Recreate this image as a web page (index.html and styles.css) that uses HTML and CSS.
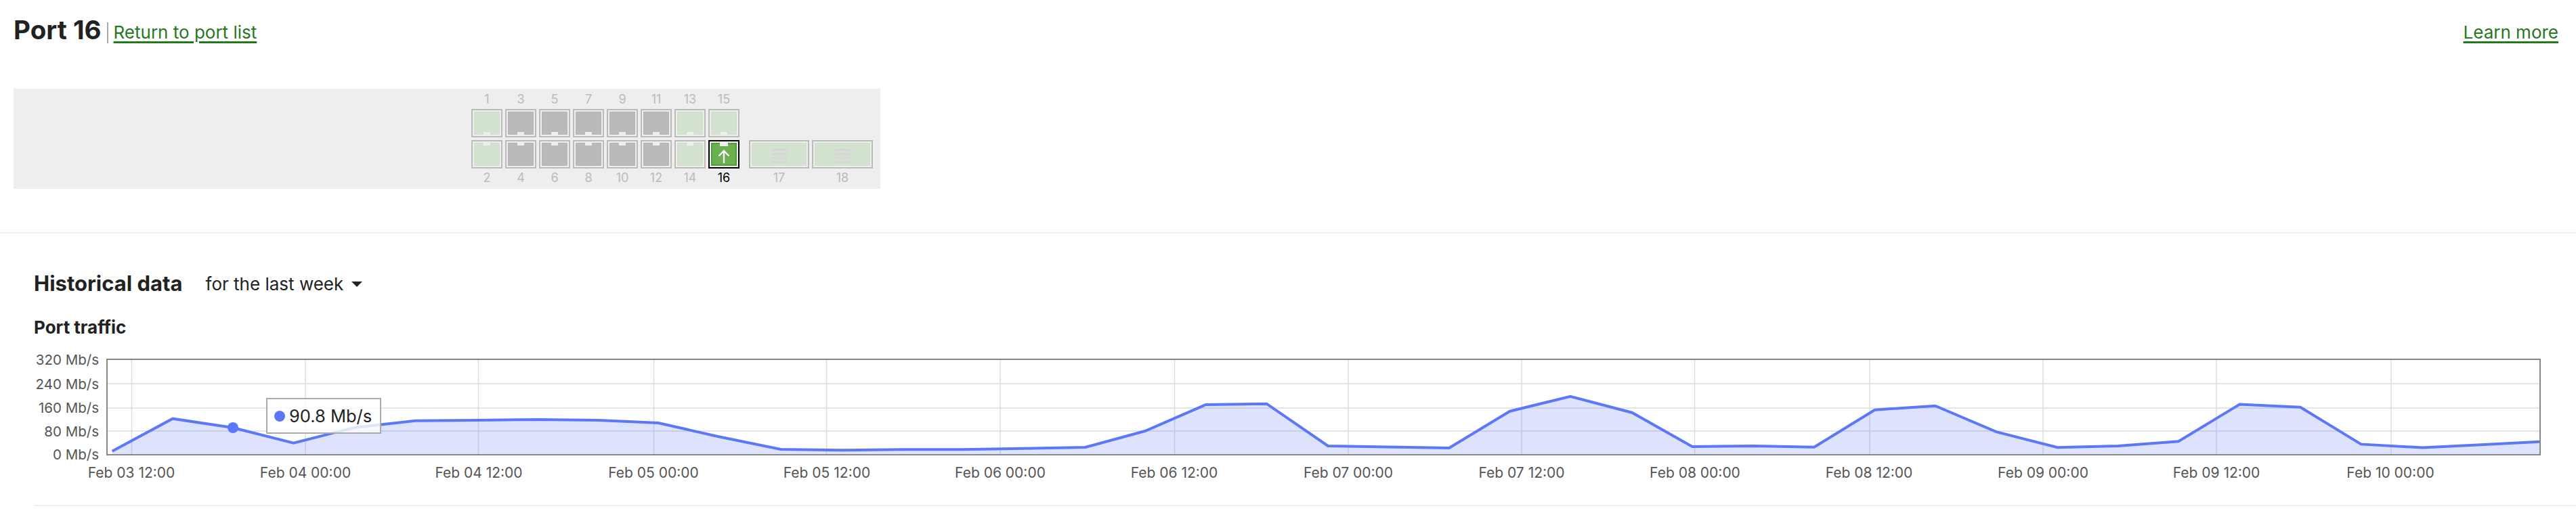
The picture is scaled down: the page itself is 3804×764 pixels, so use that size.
FILE: index.html
```html
<!DOCTYPE html>
<html lang="en">
<head>
<meta charset="utf-8">
<title>Port 16</title>
<link rel="stylesheet" href="styles.css">
</head>
<body>
<header class="head">
  <div class="head-left">
    <h1 class="title">Port 16</h1>
    <span class="sep"></span>
    <a class="link" href="#">Return to port list</a>
  </div>
  <a class="link" href="#">Learn more</a>
</header>

<section class="panel">
  <div class="switch">
    <div class="col"><span class="num">1</span><div class="port off"><div class="fill"></div></div><div class="port off down"><div class="fill"></div></div><span class="num">2</span></div>
    <div class="col"><span class="num">3</span><div class="port dis"><div class="fill"></div></div><div class="port dis down"><div class="fill"></div></div><span class="num">4</span></div>
    <div class="col"><span class="num">5</span><div class="port dis"><div class="fill"></div></div><div class="port dis down"><div class="fill"></div></div><span class="num">6</span></div>
    <div class="col"><span class="num">7</span><div class="port dis"><div class="fill"></div></div><div class="port dis down"><div class="fill"></div></div><span class="num">8</span></div>
    <div class="col"><span class="num">9</span><div class="port dis"><div class="fill"></div></div><div class="port dis down"><div class="fill"></div></div><span class="num">10</span></div>
    <div class="col"><span class="num">11</span><div class="port dis"><div class="fill"></div></div><div class="port dis down"><div class="fill"></div></div><span class="num">12</span></div>
    <div class="col"><span class="num">13</span><div class="port off"><div class="fill"></div></div><div class="port off down"><div class="fill"></div></div><span class="num">14</span></div>
    <div class="col"><span class="num">15</span><div class="port off"><div class="fill"></div></div>
      <div class="port active down"><div class="fill">
        <svg class="arrow" viewBox="0 0 18 20" aria-hidden="true"><path d="M9 20V2M1.5 9.5 9 2l7.5 7.5" fill="none" stroke="#fff" stroke-width="2.4"/></svg>
      </div></div>
      <span class="num cur">16</span>
    </div>
    <div class="sfps">
      <div class="col sfp-col sfp-a"><div class="port sfp off"><div class="fill"><div class="bars"><i></i><i></i><i></i><i></i></div></div></div><span class="num">17</span></div>
      <div class="col sfp-col sfp-b"><div class="port sfp off"><div class="fill"><div class="bars"><i></i><i></i><i></i><i></i></div></div></div><span class="num">18</span></div>
    </div>
  </div>
</section>

<section class="history">
  <div class="hist-head">
    <h2 class="h2">Historical data</h2>
    <div class="range">for the last week<span class="caret"></span></div>
  </div>
  <h3 class="h3">Port traffic</h3>
  <div class="chart">
    <svg class="plot" width="3754" height="190" viewBox="50 520 3754 190" aria-label="Port traffic chart">
      <g class="grid-h">
        <line x1="158" x2="3751" y1="567" y2="567"/>
        <line x1="158" x2="3751" y1="603" y2="603"/>
        <line x1="158" x2="3751" y1="637" y2="637"/>
      </g>
      <g class="grid-v">
        <line x1="194.5" x2="194.5" y1="531" y2="672"/>
        <line x1="451" x2="451" y1="531" y2="672"/>
        <line x1="706.5" x2="706.5" y1="531" y2="672"/>
        <line x1="965.5" x2="965.5" y1="531" y2="672"/>
        <line x1="1220.5" x2="1220.5" y1="531" y2="672"/>
        <line x1="1477" x2="1477" y1="531" y2="672"/>
        <line x1="1734.5" x2="1734.5" y1="531" y2="672"/>
        <line x1="1991" x2="1991" y1="531" y2="672"/>
        <line x1="2247" x2="2247" y1="531" y2="672"/>
        <line x1="2502.5" x2="2502.5" y1="531" y2="672"/>
        <line x1="2761" x2="2761" y1="531" y2="672"/>
        <line x1="3017" x2="3017" y1="531" y2="672"/>
        <line x1="3273" x2="3273" y1="531" y2="672"/>
        <line x1="3531" x2="3531" y1="531" y2="672"/>
      </g>
      <polygon class="area" points="165.7,672 165.7,666.7 255,618.7 344,632 433.5,654.7 524,631.7 613.4,621.7 704,621 795,620 884.4,621 972.4,625 1060,645 1153,664 1242,665.3 1331.6,664.3 1421,664.3 1510,662.7 1602.7,661 1690.7,637 1780.6,598 1870.5,596.7 1961,659 2050,660.5 2140,662 2229.6,607.7 2319,585.7 2410,609.7 2499,660 2588.6,659 2679,660.7 2768.5,605.7 2857.8,599.7 2948,638.2 3038.4,661.3 3127.7,659 3217,652.3 3307.3,597.5 3397,601.7 3486.5,656.4 3577.8,661.5 3668,657 3750,652.8 3750,672"/>
      <polyline class="line" points="165.7,666.7 255,618.7 344,632 433.5,654.7 524,631.7 613.4,621.7 704,621 795,620 884.4,621 972.4,625 1060,645 1153,664 1242,665.3 1331.6,664.3 1421,664.3 1510,662.7 1602.7,661 1690.7,637 1780.6,598 1870.5,596.7 1961,659 2050,660.5 2140,662 2229.6,607.7 2319,585.7 2410,609.7 2499,660 2588.6,659 2679,660.7 2768.5,605.7 2857.8,599.7 2948,638.2 3038.4,661.3 3127.7,659 3217,652.3 3307.3,597.5 3397,601.7 3486.5,656.4 3577.8,661.5 3668,657 3750,652.8"/>
      <circle class="dot" cx="344" cy="632" r="8"/>
      <rect class="frame" x="158" y="531" width="3593" height="141"/>
      <g class="ylab">
        <text x="146" y="539">320 Mb/s</text>
        <text x="146" y="575">240 Mb/s</text>
        <text x="146" y="610">160 Mb/s</text>
        <text x="146" y="645">80 Mb/s</text>
        <text x="146" y="679">0 Mb/s</text>
      </g>
      <g class="xlab">
        <text x="194" y="706">Feb 03 12:00</text>
        <text x="451" y="706">Feb 04 00:00</text>
        <text x="707" y="706">Feb 04 12:00</text>
        <text x="965" y="706">Feb 05 00:00</text>
        <text x="1221" y="706">Feb 05 12:00</text>
        <text x="1477" y="706">Feb 06 00:00</text>
        <text x="1734" y="706">Feb 06 12:00</text>
        <text x="1991" y="706">Feb 07 00:00</text>
        <text x="2247" y="706">Feb 07 12:00</text>
        <text x="2503" y="706">Feb 08 00:00</text>
        <text x="2760" y="706">Feb 08 12:00</text>
        <text x="3017" y="706">Feb 09 00:00</text>
        <text x="3273" y="706">Feb 09 12:00</text>
        <text x="3530" y="706">Feb 10 00:00</text>
      </g>
    </svg>
    <div class="tip"><span class="tip-dot"></span>90.8 Mb/s</div>
  </div>
  <div class="rule"></div>
</section>
</body>
</html>
```
FILE: styles.css
```css
* { box-sizing: border-box; }
html, body { margin: 0; padding: 0; background: #fff; }
body { font-family: Inter, "Liberation Sans", sans-serif; color: #222; width: 3804px; height: 764px; overflow: hidden; }

.head { display: flex; justify-content: space-between; align-items: flex-start; padding: 22px 26px 0 20px; height: 131px; }
.head-left { display: flex; align-items: flex-start; }
.title { margin: 0; font-size: 38.5px; font-weight: 700; line-height: 44px; }
.sep { width: 2px; height: 31px; background: #aaa; margin: 11px 8px 0 8px; }
.link { margin-top: 7px; font-size: 26px; line-height: 38px; color: #24791c; text-decoration: underline; text-decoration-thickness: 3px; text-underline-offset: 4px; }

.panel { margin-left: 20px; width: 1280px; height: 148px; background: #eee; }
.switch { display: flex; gap: 4px; padding-left: 676px; }
.col { display: flex; flex-direction: column; width: 46px; padding-top: 5px; }
.num { display: block; height: 22px; line-height: 22px; text-align: center; font-size: 18px; color: #bbb; }
.num.cur { color: #000; }
.port { width: 46px; height: 42px; margin-top: 3px; border: 2px solid #bbb; padding: 2px; display: flex; }
.port.down { margin-top: 4px; margin-bottom: 3px; }
.fill { flex: 1; position: relative; display: flex; align-items: center; justify-content: center; }
.fill::after { content: ""; position: absolute; left: 50%; bottom: 0; width: 10px; height: 4px; margin-left: -5px; background: #eee; }
.port.down .fill::after { bottom: auto; top: 0; }
.off .fill { background: #d3e3cf; box-shadow: inset 0 0 0 1px #cfe0ca; }
.dis .fill { background: #bababa; box-shadow: inset 0 0 0 1px #b4b4b4; }
.active { border-color: #000; background: #eee; }
.active .fill { background: #6ab04f; box-shadow: inset 0 0 0 2px #549c41; padding-top: 5px; }
.active .fill::after { top: 0; width: 12px; height: 5px; margin-left: -6px; }
.arrow { width: 18px; height: 20px; display: block; }

.sfps { display: flex; gap: 4px; margin-left: 10px; padding-top: 76px; }
.sfp-col { padding-top: 0; }
.sfp-col .port { margin-top: 0; margin-bottom: 3px; }
.sfp-a, .sfp-a .sfp { width: 89px; }
.sfp-b, .sfp-b .sfp { width: 90px; }
.sfp .fill::after { display: none; }
.bars { display: flex; flex-direction: column; gap: 3px; padding-top: 4px; }
.bars i { display: block; width: 22px; height: 3px; background: #d6d6d6; }

.history { margin-top: 64px; border-top: 2px solid #f0f0f0; padding: 55px 0 0 50px; }
.hist-head { display: flex; align-items: center; height: 36px; }
.h2 { margin: 0; font-size: 31px; font-weight: 700; line-height: 36px; position: relative; top: 1px; }
.range { display: flex; align-items: center; margin-left: 34px; padding-top: 4px; font-size: 26px; line-height: 36px; color: #222; }
.caret { width: 0; height: 0; margin-left: 12px; border-left: 8px solid transparent; border-right: 8px solid transparent; border-top: 8px solid #222; }
.h3 { margin: 33px 0 0; font-size: 26px; font-weight: 700; line-height: 30px; }
.chart { position: relative; height: 190px; margin-top: 21px; }
.plot { display: block; }
.grid-h line { stroke: #e5e5e5; stroke-width: 2; }
.grid-v line { stroke: #dedede; stroke-width: 1.5; }
.area { fill: rgba(88, 115, 245, 0.2); }
.line { fill: none; stroke: #5b78f8; stroke-width: 4; }
.dot { fill: #5b78f8; }
.frame { fill: none; stroke: #888; stroke-width: 2; }
.ylab text { text-anchor: end; font-size: 20.5px; fill: #555; }
.xlab text { text-anchor: middle; font-size: 21px; fill: #555; }
.tip { position: absolute; left: 343px; top: 68px; width: 170px; height: 53px; display: flex; align-items: center; padding-left: 10px; gap: 6px; border: 2px solid #aaa; background: rgba(255, 255, 255, 0.8); font-size: 25.5px; color: #222; }
.tip-dot { width: 16px; height: 16px; border-radius: 50%; background: #5b78f8; }
.rule { height: 2px; margin-top: 36px; background: #f0f0f0; }
```
